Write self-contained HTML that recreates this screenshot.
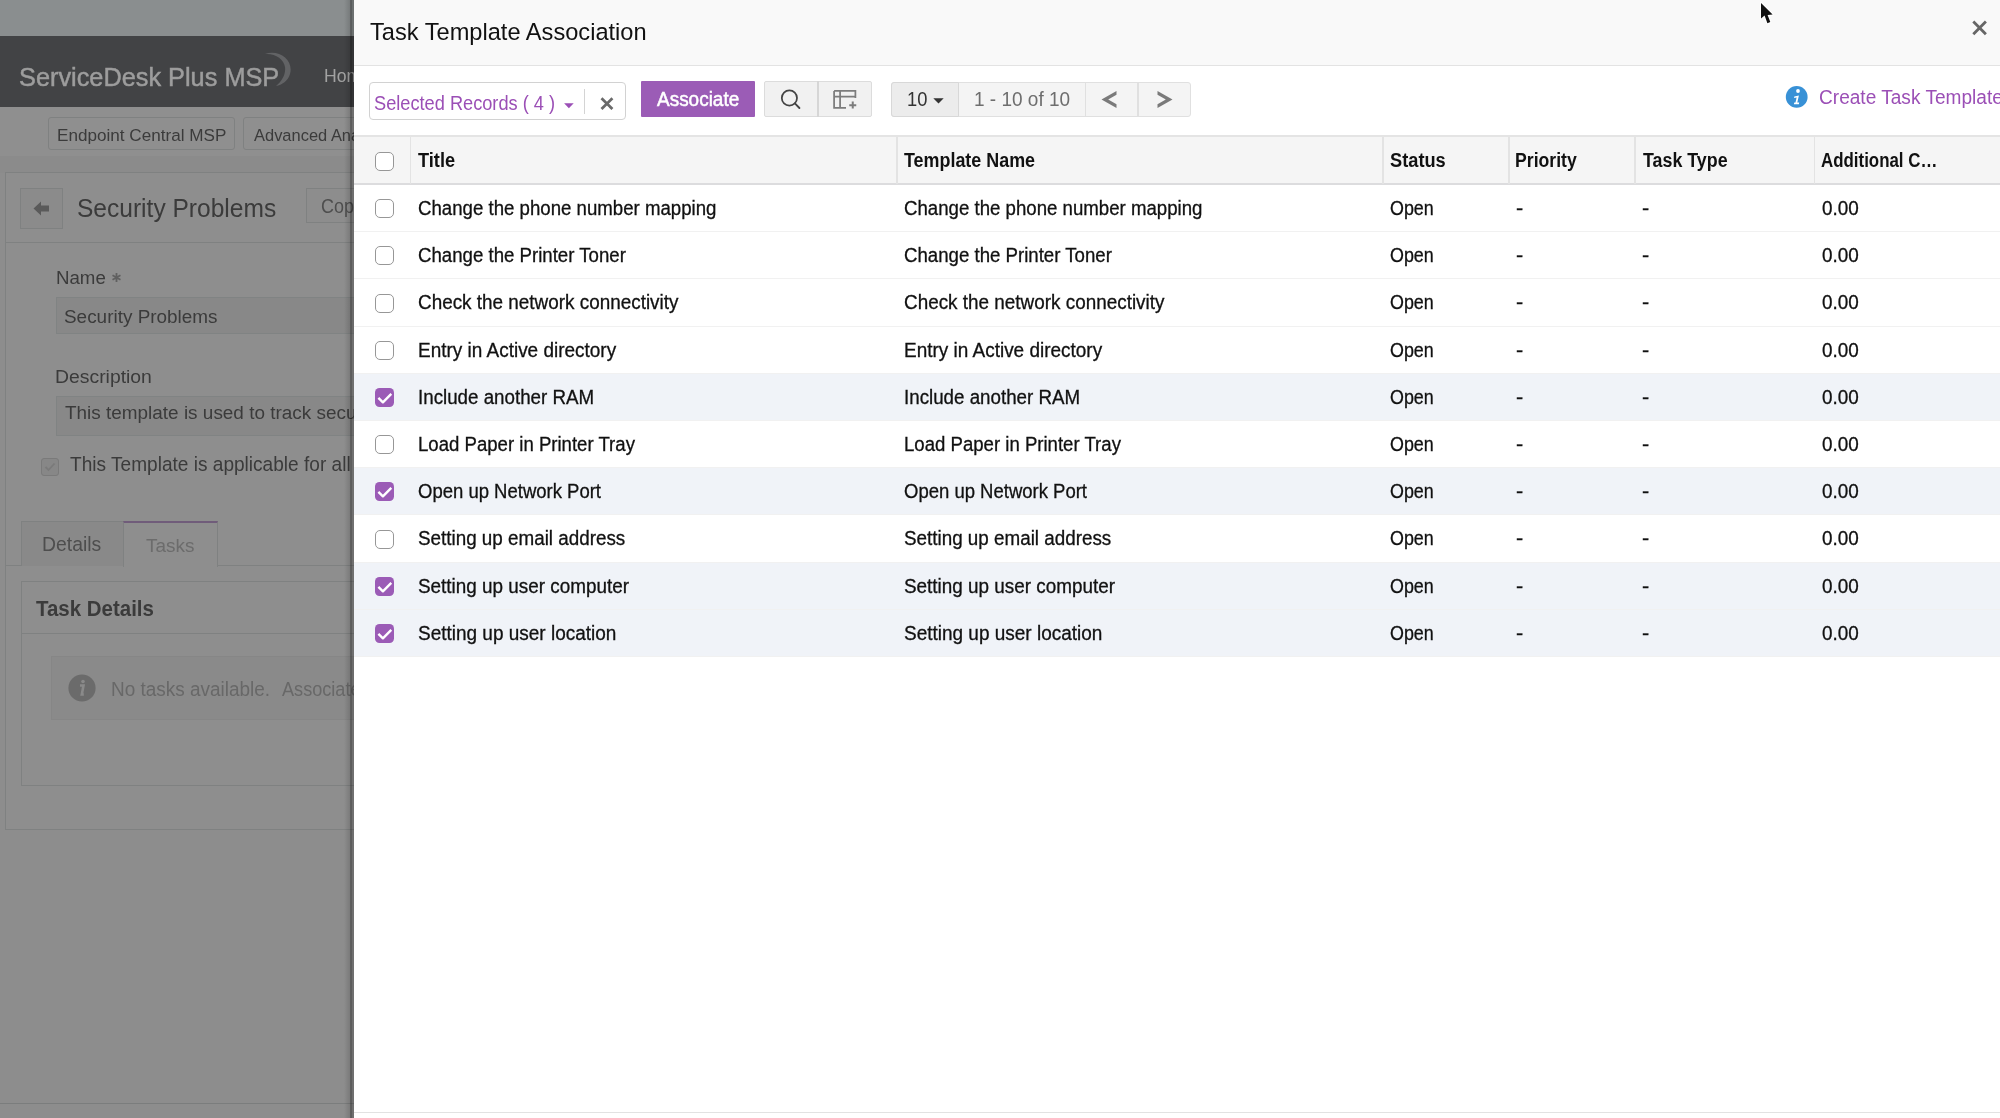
<!DOCTYPE html>
<html><head><meta charset="utf-8">
<style>
*{box-sizing:border-box;margin:0;padding:0}
html,body{width:2000px;height:1118px;overflow:hidden;background:#8c8c8c;font-family:"Liberation Sans",sans-serif}
.a{position:absolute}
#bg{position:absolute;left:0;top:0;width:354px;height:1118px;overflow:hidden;background:#8d8d8d;will-change:transform}
#modal{position:absolute;left:354px;top:0;width:1646px;height:1118px;background:#fff;overflow:hidden;will-change:transform}
.t{position:absolute;white-space:nowrap;line-height:1;transform-origin:0 0}
.cb{position:absolute;width:19px;height:19px;border:1.8px solid #979797;border-radius:5px;background:#fff}
.cb.on{border:none;background:#9b5bb6;border-radius:4.5px}
.cb svg{position:absolute;left:0;top:0}
</style></head><body>
<div id="bg">
<div class="a" style="left:0;top:0;width:354px;height:36px;background:#8a8e8f"></div>
<div class="a" style="left:0;top:36px;width:354px;height:71px;background:#424345"></div>
<svg class="a" style="left:255px;top:50px" width="40" height="40" viewBox="0 0 40 40"><path d="M10 4 C24 -1 39 10 35 24 C33 31 27 35 21 36 C27 31 31 24 30 17 C29 9 20 3 10 4 Z" fill="#626365"/></svg>
<div class="a" style="left:0;top:107px;width:354px;height:49px;background:#8f8f8f"></div>
<div class="a" style="left:0;top:156px;width:354px;height:17px;background:#8b8b8b"></div>
<div class="a" style="left:48px;top:117px;width:187px;height:33px;border:1px solid #7f8181;border-radius:3px"></div>
<div class="a" style="left:243px;top:117px;width:160px;height:33px;border:1px solid #7f8181;border-radius:3px"></div>
<div class="a" style="left:5px;top:172px;width:420px;height:658px;border:1px solid #7f8181;background:#8e8e8e"></div>
<div class="a" style="left:5px;top:242px;width:420px;height:1px;background:#7f8181"></div>
<div class="a" style="left:20.3px;top:188.3px;width:42.5px;height:40.5px;border:1px solid #7f8181;background:#8b8b8b"></div>
<svg class="a" style="left:32px;top:200px" width="18" height="17" viewBox="0 0 18 17"><path d="M1.5 8.5 L9 1.5 L9 5.5 L17 5.5 L17 11.5 L9 11.5 L9 15.5 Z" fill="#5a5a5a"/></svg>
<div class="a" style="left:306px;top:188.4px;width:80px;height:35px;border:1px solid #7f8181;background:#8d8d8d"></div>
<svg class="a" style="left:111px;top:272px" width="11" height="11" viewBox="0 0 11 11"><path d="M5.5 1 L5.5 10 M1.5 3.2 L9.5 7.8 M9.5 3.2 L1.5 7.8" stroke="#606060" stroke-width="1.8"/></svg>
<div class="a" style="left:56px;top:297px;width:330px;height:37px;border:1px solid #808383;background:#888888"></div>
<div class="a" style="left:56px;top:396px;width:330px;height:40px;border:1px solid #808383;background:#888888"></div>
<div class="a" style="left:41px;top:458px;width:18px;height:18px;border:1px solid #7a7a7a;background:#878787;border-radius:3px"></div>
<svg class="a" style="left:42px;top:459px" width="16" height="16" viewBox="0 0 16 16"><path d="M3.5 8 L6.5 11 L12.5 4.5" fill="none" stroke="#7a7a7a" stroke-width="1.8"/></svg>
<div class="a" style="left:5px;top:565px;width:420px;height:1px;background:#7f8181"></div>
<div class="a" style="left:20.5px;top:520.5px;width:103px;height:45px;border:1px solid #7f8181;border-bottom:none;background:#898989"></div>
<div class="a" style="left:123px;top:520.5px;width:95px;height:46px;border:1px solid #7f8181;border-top:2.5px solid #705c7a;border-bottom:none;background:#8e8e8e"></div>
<div class="a" style="left:20.5px;top:581px;width:420px;height:205px;border:1px solid #7f8181;background:#8e8e8e"></div>
<div class="a" style="left:20.5px;top:633px;width:420px;height:1px;background:#7f8181"></div>
<div class="a" style="left:50.5px;top:656px;width:400px;height:64px;border:1px solid #868686;background:#8a8a8a"></div>
<svg class="a" style="left:68px;top:674px" width="28" height="28" viewBox="0 0 28 28"><circle cx="14" cy="14" r="13.6" fill="#6b6b6b"/><circle cx="15" cy="7.5" r="1.8" fill="#8a8a8a"/><path d="M12 11.5 L15.5 11.5 L13.8 20.5 L15.8 20.5" fill="none" stroke="#8a8a8a" stroke-width="2.6"/></svg>
<div class="a" style="left:0;top:1103px;width:354px;height:1px;background:#7b7d7d"></div>

<div class="t" style="left:18.65px;top:64.10px;font-size:26.7px;color:#9d9d9d;transform:scaleX(0.9485);-webkit-text-stroke:0.5px #9d9d9d;">ServiceDesk Plus MSP</div>
<div class="t" style="left:324.08px;top:65.75px;font-size:19.2px;color:#a2a2a2;transform:scaleX(0.9200);">Home</div>
<div class="t" style="left:56.92px;top:126.90px;font-size:17.4px;color:#3b3b3b;transform:scaleX(0.9847);">Endpoint Central MSP</div>
<div class="t" style="left:253.60px;top:126.90px;font-size:17.4px;color:#3b3b3b;transform:scaleX(0.9467);">Advanced Analytics</div>
<div class="t" style="left:77.02px;top:195.60px;font-size:25.1px;color:#3b3b3b;transform:scaleX(0.9782);">Security Problems</div>
<div class="t" style="left:321.47px;top:196.60px;font-size:19.3px;color:#4e4e4e;transform:scaleX(0.9318);">Copy</div>
<div class="t" style="left:55.61px;top:269.00px;font-size:18.9px;color:#3b3b3b;transform:scaleX(0.9878);">Name</div>
<div class="t" style="left:64.01px;top:307.00px;font-size:19.2px;color:#3b3b3b;transform:scaleX(0.9864);">Security Problems</div>
<div class="t" style="left:55.39px;top:366.70px;font-size:19.2px;color:#3b3b3b;transform:scaleX(1.0096);">Description</div>
<div class="t" style="left:64.70px;top:402.50px;font-size:19.2px;color:#3b3b3b;transform:scaleX(0.9868);">This template is used to track security issues</div>
<div class="t" style="left:69.60px;top:455.30px;font-size:19.3px;color:#3b3b3b;transform:scaleX(0.9894);">This Template is applicable for all</div>
<div class="t" style="left:41.85px;top:534.70px;font-size:19.9px;color:#4e4e4e;transform:scaleX(0.9741);">Details</div>
<div class="t" style="left:145.90px;top:535.80px;font-size:19.2px;color:#6c6c6c;transform:scaleX(0.9878);">Tasks</div>
<div class="t" style="left:35.90px;top:598.20px;font-size:22.4px;font-weight:bold;color:#3b3b3b;transform:scaleX(0.9141);">Task Details</div>
<div class="t" style="left:110.56px;top:680.40px;font-size:19.5px;color:#686868;transform:scaleX(0.9719);">No tasks available.</div>
<div class="t" style="left:281.50px;top:680.40px;font-size:19.5px;color:#686868;transform:scaleX(0.9286);">Associate</div>
<div class="a" style="left:344px;top:0;width:8px;height:1118px;background:linear-gradient(to right,rgba(0,0,0,0),rgba(0,0,0,0.18))"></div>
<div class="a" style="left:350px;top:0;width:4px;height:1118px;background:rgba(0,0,0,0.21)"></div>
</div>
<div id="modal">
<div class="a" style="left:0;top:0;width:1646px;height:66.3px;background:#f9f9f9;border-bottom:1.2px solid #e3e3e3"></div>
<svg class="a" style="left:1617.00px;top:20px" width="17" height="16" viewBox="0 0 17 16"><path d="M2.3 1.6 L14.9 14.2 M14.9 1.6 L2.3 14.2" stroke="#666" stroke-width="2.8"/></svg>
<div class="a" style="left:15.00px;top:82px;width:257px;height:38px;border:1px solid #d2d2d2;border-radius:4px;background:#fff"></div>
<svg class="a" style="left:208.50px;top:102.5px" width="12" height="6" viewBox="0 0 12 6"><path d="M1.1 0.3 L10.7 0.3 L5.9 5.3 Z" fill="#9b4fb6"/></svg>
<div class="a" style="left:229.70px;top:88.5px;width:1.2px;height:25px;background:#d4d4d4"></div>
<svg class="a" style="left:245.00px;top:96px" width="17" height="16" viewBox="0 0 17 16"><path d="M2.5 2.3 L13.4 13 M13.4 2.3 L2.5 13" stroke="#6a6a6a" stroke-width="2.8"/></svg>
<div class="a" style="left:287.00px;top:81px;width:114px;height:36px;background:#9b5cb6;border-radius:1px"></div>
<div class="a" style="left:409.50px;top:81px;width:108.5px;height:36px;background:#f1f1f1;border:1px solid #dcdcdc;border-radius:2px"></div>
<div class="a" style="left:463.00px;top:81px;width:1.5px;height:36px;background:#d6d6d6"></div>
<svg class="a" style="left:425.00px;top:87px" width="24" height="24" viewBox="0 0 24 24"><circle cx="10.4" cy="10.9" r="7.6" fill="none" stroke="#444" stroke-width="1.75"/><path d="M15.9 16.4 L20.4 21" stroke="#444" stroke-width="1.9" stroke-linecap="round"/></svg>
<svg class="a" style="left:477.00px;top:88px" width="28" height="24" viewBox="0 0 28 24"><path d="M3.1 2.9 L3.1 19.9 L15 19.9 M3.1 2.9 L24.4 2.9 L24.4 10 M3.1 8.6 L24.4 8.6 M9.1 2.9 L9.1 19.9" fill="none" stroke="#7c7c7c" stroke-width="1.75"/><path d="M21.75 13.6 L21.75 20.6 M18.25 17.25 L25.25 17.25" stroke="#7c7c7c" stroke-width="2"/></svg>
<div class="a" style="left:537.00px;top:81.5px;width:300px;height:35px;background:#f4f4f4;border:1px solid #e0e0e0;border-radius:3px"></div>
<div class="a" style="left:537.00px;top:81.5px;width:68px;height:35px;background:#ececec;border:1px solid #d8d8d8;border-radius:3px 0 0 3px"></div>
<div class="a" style="left:730.50px;top:82px;width:1.5px;height:34px;background:#e0e0e0"></div>
<div class="a" style="left:783.00px;top:82px;width:1.5px;height:34px;background:#e0e0e0"></div>
<svg class="a" style="left:578.50px;top:98px" width="11" height="6" viewBox="0 0 11 6"><path d="M0.3 0.3 L10.7 0.3 L5.5 5.6 Z" fill="#333"/></svg>
<svg class="a" style="left:746.00px;top:90px" width="18" height="20" viewBox="0 0 18 20"><path d="M16.5 1 L1.5 9.5 L16.5 18 L16.5 14.3 L8.2 9.5 L16.5 4.7 Z" fill="#7a7a7a"/></svg>
<svg class="a" style="left:802.00px;top:90px" width="18" height="20" viewBox="0 0 18 20"><path d="M1.5 1 L16.5 9.5 L1.5 18 L1.5 14.3 L9.8 9.5 L1.5 4.7 Z" fill="#7a7a7a"/></svg>
<svg class="a" style="left:1431.00px;top:85px" width="24" height="24" viewBox="0 0 24 24"><circle cx="11.7" cy="11.9" r="10.9" fill="#3891d6"/><circle cx="13" cy="6" r="1.9" fill="#fff"/><path d="M9.3 11.6 L13.9 10.4 L12.3 17.4 L14.2 17.4 L13.9 19.2 L8.9 19.2 L9.3 17.4 L10.5 17.4 L11.6 12.6 L9.1 13 Z" fill="#fff"/></svg>
<div class="a" style="left:0;top:135px;width:1646px;height:50px;background:#f5f5f5;border-top:2px solid #e4e4e4;border-bottom:2px solid #dcdcde"></div>

<div class="a" style="left:55.50px;top:137px;width:1.5px;height:46.5px;background:#e3e3e3"></div>
<div class="a" style="left:542.00px;top:137px;width:1.5px;height:46.5px;background:#e3e3e3"></div>
<div class="a" style="left:1028.00px;top:137px;width:1.5px;height:46.5px;background:#e3e3e3"></div>
<div class="a" style="left:1154.00px;top:137px;width:1.5px;height:46.5px;background:#e3e3e3"></div>
<div class="a" style="left:1280.00px;top:137px;width:1.5px;height:46.5px;background:#e3e3e3"></div>
<div class="a" style="left:1459.50px;top:137px;width:1.5px;height:46.5px;background:#e3e3e3"></div>
<div class="cb" style="left:21.00px;top:151.5px"></div>
<div class="a" style="left:0;top:185.10px;width:1646px;height:47.2px;background:#fff;border-bottom:1.5px solid #f1f1f1"></div>
<div class="cb" style="left:21.00px;top:199.20px"></div>
<div class="a" style="left:0;top:232.30px;width:1646px;height:47.2px;background:#fff;border-bottom:1.5px solid #f1f1f1"></div>
<div class="cb" style="left:21.00px;top:246.40px"></div>
<div class="a" style="left:0;top:279.50px;width:1646px;height:47.2px;background:#fff;border-bottom:1.5px solid #f1f1f1"></div>
<div class="cb" style="left:21.00px;top:293.60px"></div>
<div class="a" style="left:0;top:326.70px;width:1646px;height:47.2px;background:#fff;border-bottom:1.5px solid #f1f1f1"></div>
<div class="cb" style="left:21.00px;top:340.80px"></div>
<div class="a" style="left:0;top:373.90px;width:1646px;height:47.2px;background:#f0f3f8;border-bottom:1.5px solid #f1f1f1"></div>
<div class="cb on" style="left:21.00px;top:388.00px"><svg width="19" height="19" viewBox="0 0 19 19"><path d="M3.4 9.9 L7.9 14.3 L16.3 5.9" fill="none" stroke="#fff" stroke-width="2.4" stroke-linejoin="round"/></svg></div>
<div class="a" style="left:0;top:421.10px;width:1646px;height:47.2px;background:#fff;border-bottom:1.5px solid #f1f1f1"></div>
<div class="cb" style="left:21.00px;top:435.20px"></div>
<div class="a" style="left:0;top:468.30px;width:1646px;height:47.2px;background:#f0f3f8;border-bottom:1.5px solid #f1f1f1"></div>
<div class="cb on" style="left:21.00px;top:482.40px"><svg width="19" height="19" viewBox="0 0 19 19"><path d="M3.4 9.9 L7.9 14.3 L16.3 5.9" fill="none" stroke="#fff" stroke-width="2.4" stroke-linejoin="round"/></svg></div>
<div class="a" style="left:0;top:515.50px;width:1646px;height:47.2px;background:#fff;border-bottom:1.5px solid #f1f1f1"></div>
<div class="cb" style="left:21.00px;top:529.60px"></div>
<div class="a" style="left:0;top:562.70px;width:1646px;height:47.2px;background:#f0f3f8;border-bottom:1.5px solid #f1f1f1"></div>
<div class="cb on" style="left:21.00px;top:576.80px"><svg width="19" height="19" viewBox="0 0 19 19"><path d="M3.4 9.9 L7.9 14.3 L16.3 5.9" fill="none" stroke="#fff" stroke-width="2.4" stroke-linejoin="round"/></svg></div>
<div class="a" style="left:0;top:609.90px;width:1646px;height:47.2px;background:#f0f3f8;border-bottom:1.5px solid #f1f1f1"></div>
<div class="cb on" style="left:21.00px;top:624.00px"><svg width="19" height="19" viewBox="0 0 19 19"><path d="M3.4 9.9 L7.9 14.3 L16.3 5.9" fill="none" stroke="#fff" stroke-width="2.4" stroke-linejoin="round"/></svg></div>
<div class="t" style="left:15.70px;top:19.75px;font-size:24.5px;color:#111;transform:scaleX(0.9643);">Task Template Association</div>
<div class="t" style="left:19.82px;top:93.75px;font-size:19.6px;color:#9b4fb6;transform:scaleX(0.9288);">Selected Records ( 4 )</div>
<div class="t" style="left:303.10px;top:89.80px;font-size:19.6px;color:#fff;transform:scaleX(0.9679);-webkit-text-stroke:0.5px #fff;">Associate</div>
<div class="t" style="left:553.15px;top:89.50px;font-size:19.4px;color:#333;transform:scaleX(0.9450);">10</div>
<div class="t" style="left:620.22px;top:89.50px;font-size:19.4px;color:#6e6e6e;transform:scaleX(0.9792);">1 - 10 of 10</div>
<div class="t" style="left:1465.42px;top:87.80px;font-size:19.4px;color:#9b4fb6;transform:scaleX(0.9838);">Create Task Template</div>
<div class="t" style="left:64.40px;top:150.80px;font-size:19.6px;font-weight:bold;color:#111;transform:scaleX(0.9282);">Title</div>
<div class="t" style="left:550.15px;top:150.80px;font-size:19.6px;font-weight:bold;color:#111;transform:scaleX(0.9140);">Template Name</div>
<div class="t" style="left:1035.57px;top:150.80px;font-size:19.6px;font-weight:bold;color:#111;transform:scaleX(0.9310);">Status</div>
<div class="t" style="left:1161.35px;top:150.80px;font-size:19.6px;font-weight:bold;color:#111;transform:scaleX(0.9007);">Priority</div>
<div class="t" style="left:1288.50px;top:150.80px;font-size:19.6px;font-weight:bold;color:#111;transform:scaleX(0.9103);">Task Type</div>
<div class="t" style="left:1467.39px;top:150.80px;font-size:19.6px;font-weight:bold;color:#111;transform:scaleX(0.8617);">Additional C…</div>
<div class="t" style="left:63.85px;top:198.90px;font-size:19.6px;color:#111;transform:scaleX(0.9513);-webkit-text-stroke:0.3px #111;">Change the phone number mapping</div>
<div class="t" style="left:549.85px;top:198.90px;font-size:19.6px;color:#111;transform:scaleX(0.9513);-webkit-text-stroke:0.3px #111;">Change the phone number mapping</div>
<div class="t" style="left:1035.89px;top:198.90px;font-size:19.6px;color:#111;transform:scaleX(0.9130);-webkit-text-stroke:0.3px #111;">Open</div>
<div class="t" style="left:1162.40px;top:198.90px;font-size:19.6px;color:#111;transform:scaleX(1.1000);-webkit-text-stroke:0.3px #111;">-</div>
<div class="t" style="left:1288.40px;top:198.90px;font-size:19.6px;color:#111;transform:scaleX(1.1000);-webkit-text-stroke:0.3px #111;">-</div>
<div class="t" style="left:1467.64px;top:198.90px;font-size:19.6px;color:#111;transform:scaleX(0.9649);-webkit-text-stroke:0.3px #111;">0.00</div>
<div class="t" style="left:63.85px;top:246.10px;font-size:19.6px;color:#111;transform:scaleX(0.9512);-webkit-text-stroke:0.3px #111;">Change the Printer Toner</div>
<div class="t" style="left:549.85px;top:246.10px;font-size:19.6px;color:#111;transform:scaleX(0.9512);-webkit-text-stroke:0.3px #111;">Change the Printer Toner</div>
<div class="t" style="left:1035.89px;top:246.10px;font-size:19.6px;color:#111;transform:scaleX(0.9130);-webkit-text-stroke:0.3px #111;">Open</div>
<div class="t" style="left:1162.40px;top:246.10px;font-size:19.6px;color:#111;transform:scaleX(1.1000);-webkit-text-stroke:0.3px #111;">-</div>
<div class="t" style="left:1288.40px;top:246.10px;font-size:19.6px;color:#111;transform:scaleX(1.1000);-webkit-text-stroke:0.3px #111;">-</div>
<div class="t" style="left:1467.64px;top:246.10px;font-size:19.6px;color:#111;transform:scaleX(0.9649);-webkit-text-stroke:0.3px #111;">0.00</div>
<div class="t" style="left:63.84px;top:293.30px;font-size:19.6px;color:#111;transform:scaleX(0.9643);-webkit-text-stroke:0.3px #111;">Check the network connectivity</div>
<div class="t" style="left:549.84px;top:293.30px;font-size:19.6px;color:#111;transform:scaleX(0.9643);-webkit-text-stroke:0.3px #111;">Check the network connectivity</div>
<div class="t" style="left:1035.89px;top:293.30px;font-size:19.6px;color:#111;transform:scaleX(0.9130);-webkit-text-stroke:0.3px #111;">Open</div>
<div class="t" style="left:1162.40px;top:293.30px;font-size:19.6px;color:#111;transform:scaleX(1.1000);-webkit-text-stroke:0.3px #111;">-</div>
<div class="t" style="left:1288.40px;top:293.30px;font-size:19.6px;color:#111;transform:scaleX(1.1000);-webkit-text-stroke:0.3px #111;">-</div>
<div class="t" style="left:1467.64px;top:293.30px;font-size:19.6px;color:#111;transform:scaleX(0.9649);-webkit-text-stroke:0.3px #111;">0.00</div>
<div class="t" style="left:63.76px;top:340.50px;font-size:19.6px;color:#111;transform:scaleX(0.9680);-webkit-text-stroke:0.3px #111;">Entry in Active directory</div>
<div class="t" style="left:549.76px;top:340.50px;font-size:19.6px;color:#111;transform:scaleX(0.9680);-webkit-text-stroke:0.3px #111;">Entry in Active directory</div>
<div class="t" style="left:1035.89px;top:340.50px;font-size:19.6px;color:#111;transform:scaleX(0.9130);-webkit-text-stroke:0.3px #111;">Open</div>
<div class="t" style="left:1162.40px;top:340.50px;font-size:19.6px;color:#111;transform:scaleX(1.1000);-webkit-text-stroke:0.3px #111;">-</div>
<div class="t" style="left:1288.40px;top:340.50px;font-size:19.6px;color:#111;transform:scaleX(1.1000);-webkit-text-stroke:0.3px #111;">-</div>
<div class="t" style="left:1467.64px;top:340.50px;font-size:19.6px;color:#111;transform:scaleX(0.9649);-webkit-text-stroke:0.3px #111;">0.00</div>
<div class="t" style="left:63.79px;top:387.70px;font-size:19.6px;color:#111;transform:scaleX(0.9569);-webkit-text-stroke:0.3px #111;">Include another RAM</div>
<div class="t" style="left:549.79px;top:387.70px;font-size:19.6px;color:#111;transform:scaleX(0.9569);-webkit-text-stroke:0.3px #111;">Include another RAM</div>
<div class="t" style="left:1035.89px;top:387.70px;font-size:19.6px;color:#111;transform:scaleX(0.9130);-webkit-text-stroke:0.3px #111;">Open</div>
<div class="t" style="left:1162.40px;top:387.70px;font-size:19.6px;color:#111;transform:scaleX(1.1000);-webkit-text-stroke:0.3px #111;">-</div>
<div class="t" style="left:1288.40px;top:387.70px;font-size:19.6px;color:#111;transform:scaleX(1.1000);-webkit-text-stroke:0.3px #111;">-</div>
<div class="t" style="left:1467.64px;top:387.70px;font-size:19.6px;color:#111;transform:scaleX(0.9649);-webkit-text-stroke:0.3px #111;">0.00</div>
<div class="t" style="left:63.80px;top:434.90px;font-size:19.6px;color:#111;transform:scaleX(0.9485);-webkit-text-stroke:0.3px #111;">Load Paper in Printer Tray</div>
<div class="t" style="left:549.80px;top:434.90px;font-size:19.6px;color:#111;transform:scaleX(0.9485);-webkit-text-stroke:0.3px #111;">Load Paper in Printer Tray</div>
<div class="t" style="left:1035.89px;top:434.90px;font-size:19.6px;color:#111;transform:scaleX(0.9130);-webkit-text-stroke:0.3px #111;">Open</div>
<div class="t" style="left:1162.40px;top:434.90px;font-size:19.6px;color:#111;transform:scaleX(1.1000);-webkit-text-stroke:0.3px #111;">-</div>
<div class="t" style="left:1288.40px;top:434.90px;font-size:19.6px;color:#111;transform:scaleX(1.1000);-webkit-text-stroke:0.3px #111;">-</div>
<div class="t" style="left:1467.64px;top:434.90px;font-size:19.6px;color:#111;transform:scaleX(0.9649);-webkit-text-stroke:0.3px #111;">0.00</div>
<div class="t" style="left:63.86px;top:482.10px;font-size:19.6px;color:#111;transform:scaleX(0.9440);-webkit-text-stroke:0.3px #111;">Open up Network Port</div>
<div class="t" style="left:549.86px;top:482.10px;font-size:19.6px;color:#111;transform:scaleX(0.9440);-webkit-text-stroke:0.3px #111;">Open up Network Port</div>
<div class="t" style="left:1035.89px;top:482.10px;font-size:19.6px;color:#111;transform:scaleX(0.9130);-webkit-text-stroke:0.3px #111;">Open</div>
<div class="t" style="left:1162.40px;top:482.10px;font-size:19.6px;color:#111;transform:scaleX(1.1000);-webkit-text-stroke:0.3px #111;">-</div>
<div class="t" style="left:1288.40px;top:482.10px;font-size:19.6px;color:#111;transform:scaleX(1.1000);-webkit-text-stroke:0.3px #111;">-</div>
<div class="t" style="left:1467.64px;top:482.10px;font-size:19.6px;color:#111;transform:scaleX(0.9649);-webkit-text-stroke:0.3px #111;">0.00</div>
<div class="t" style="left:63.84px;top:529.30px;font-size:19.6px;color:#111;transform:scaleX(0.9612);-webkit-text-stroke:0.3px #111;">Setting up email address</div>
<div class="t" style="left:549.84px;top:529.30px;font-size:19.6px;color:#111;transform:scaleX(0.9612);-webkit-text-stroke:0.3px #111;">Setting up email address</div>
<div class="t" style="left:1035.89px;top:529.30px;font-size:19.6px;color:#111;transform:scaleX(0.9130);-webkit-text-stroke:0.3px #111;">Open</div>
<div class="t" style="left:1162.40px;top:529.30px;font-size:19.6px;color:#111;transform:scaleX(1.1000);-webkit-text-stroke:0.3px #111;">-</div>
<div class="t" style="left:1288.40px;top:529.30px;font-size:19.6px;color:#111;transform:scaleX(1.1000);-webkit-text-stroke:0.3px #111;">-</div>
<div class="t" style="left:1467.64px;top:529.30px;font-size:19.6px;color:#111;transform:scaleX(0.9649);-webkit-text-stroke:0.3px #111;">0.00</div>
<div class="t" style="left:63.84px;top:576.50px;font-size:19.6px;color:#111;transform:scaleX(0.9642);-webkit-text-stroke:0.3px #111;">Setting up user computer</div>
<div class="t" style="left:549.84px;top:576.50px;font-size:19.6px;color:#111;transform:scaleX(0.9642);-webkit-text-stroke:0.3px #111;">Setting up user computer</div>
<div class="t" style="left:1035.89px;top:576.50px;font-size:19.6px;color:#111;transform:scaleX(0.9130);-webkit-text-stroke:0.3px #111;">Open</div>
<div class="t" style="left:1162.40px;top:576.50px;font-size:19.6px;color:#111;transform:scaleX(1.1000);-webkit-text-stroke:0.3px #111;">-</div>
<div class="t" style="left:1288.40px;top:576.50px;font-size:19.6px;color:#111;transform:scaleX(1.1000);-webkit-text-stroke:0.3px #111;">-</div>
<div class="t" style="left:1467.64px;top:576.50px;font-size:19.6px;color:#111;transform:scaleX(0.9649);-webkit-text-stroke:0.3px #111;">0.00</div>
<div class="t" style="left:63.83px;top:623.70px;font-size:19.6px;color:#111;transform:scaleX(0.9685);-webkit-text-stroke:0.3px #111;">Setting up user location</div>
<div class="t" style="left:549.83px;top:623.70px;font-size:19.6px;color:#111;transform:scaleX(0.9685);-webkit-text-stroke:0.3px #111;">Setting up user location</div>
<div class="t" style="left:1035.89px;top:623.70px;font-size:19.6px;color:#111;transform:scaleX(0.9130);-webkit-text-stroke:0.3px #111;">Open</div>
<div class="t" style="left:1162.40px;top:623.70px;font-size:19.6px;color:#111;transform:scaleX(1.1000);-webkit-text-stroke:0.3px #111;">-</div>
<div class="t" style="left:1288.40px;top:623.70px;font-size:19.6px;color:#111;transform:scaleX(1.1000);-webkit-text-stroke:0.3px #111;">-</div>
<div class="t" style="left:1467.64px;top:623.70px;font-size:19.6px;color:#111;transform:scaleX(0.9649);-webkit-text-stroke:0.3px #111;">0.00</div>
<div class="a" style="left:0;top:1111.5px;width:1646px;height:1.5px;background:#e2e2e2"></div>
</div>
<svg class="a" style="left:1758px;top:0px" width="20" height="30" viewBox="0 0 20 30"><path d="M3 3 L3 18.6 L6.6 15.6 L9.4 23.2 L12.3 22.1 L9.6 15.1 L14.6 14.5 Z" fill="#111" stroke="#fff" stroke-width="2.2" stroke-linejoin="round" paint-order="stroke"/></svg>
</body></html>
